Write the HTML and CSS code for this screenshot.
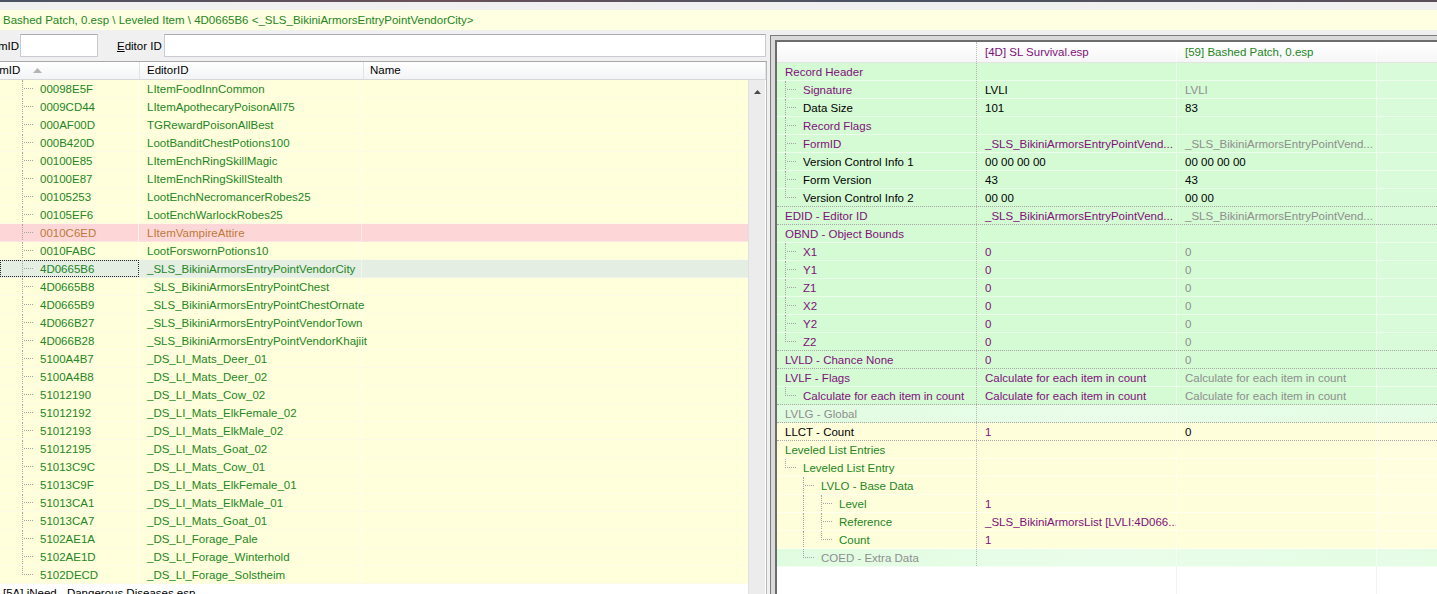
FILE: index.html
```html
<!DOCTYPE html>
<html lang="en">
<head>
    <meta charset="UTF-8">
    <title>xEdit - Leveled Item</title>
    <link rel="stylesheet" href="styles.css">
</head>
<body>

<div class="topline"></div>
<div class="crumb">Bashed Patch, 0.esp \ Leveled Item \ 4D0665B6 &lt;_SLS_BikiniArmorsEntryPointVendorCity&gt;</div>

<div class="main">
    <!-- left: record list -->
    <div class="left">
        <div class="filters">
            <span class="clip-label"><span>FormID</span></span>
            <span class="input short"></span>
            <span class="flabel"><u>E</u>ditor ID</span>
            <span class="input wide"></span>
        </div>
        <div class="list">
            <div class="list-body">
                <div class="lhead">
                    <div class="c-id"><span class="clipped">FormID</span><svg class="sort" width="9" height="5" viewBox="0 0 9 5"><path d="M0 5 L4.5 0 L9 5 Z" fill="#b4b4b4"/></svg></div>
                    <div class="c-edid">EditorID</div>
                    <div class="c-name">Name</div>
                </div>
                <div class="row"><div class="c-id"><i class="tr tee"></i>00098E5F</div><div class="c-edid">LItemFoodInnCommon</div><div class="c-name"></div></div>
                <div class="row"><div class="c-id"><i class="tr tee"></i>0009CD44</div><div class="c-edid">LItemApothecaryPoisonAll75</div><div class="c-name"></div></div>
                <div class="row"><div class="c-id"><i class="tr tee"></i>000AF00D</div><div class="c-edid">TGRewardPoisonAllBest</div><div class="c-name"></div></div>
                <div class="row"><div class="c-id"><i class="tr tee"></i>000B420D</div><div class="c-edid">LootBanditChestPotions100</div><div class="c-name"></div></div>
                <div class="row"><div class="c-id"><i class="tr tee"></i>00100E85</div><div class="c-edid">LItemEnchRingSkillMagic</div><div class="c-name"></div></div>
                <div class="row"><div class="c-id"><i class="tr tee"></i>00100E87</div><div class="c-edid">LItemEnchRingSkillStealth</div><div class="c-name"></div></div>
                <div class="row"><div class="c-id"><i class="tr tee"></i>00105253</div><div class="c-edid">LootEnchNecromancerRobes25</div><div class="c-name"></div></div>
                <div class="row"><div class="c-id"><i class="tr tee"></i>00105EF6</div><div class="c-edid">LootEnchWarlockRobes25</div><div class="c-name"></div></div>
                <div class="row pink"><div class="c-id"><i class="tr tee"></i>0010C6ED</div><div class="c-edid">LItemVampireAttire</div><div class="c-name"></div></div>
                <div class="row"><div class="c-id"><i class="tr tee"></i>0010FABC</div><div class="c-edid">LootForswornPotions10</div><div class="c-name"></div></div>
                <div class="row selected"><div class="c-id"><i class="tr tee"></i>4D0665B6</div><div class="c-edid">_SLS_BikiniArmorsEntryPointVendorCity</div><div class="c-name"></div></div>
                <div class="row"><div class="c-id"><i class="tr tee"></i>4D0665B8</div><div class="c-edid">_SLS_BikiniArmorsEntryPointChest</div><div class="c-name"></div></div>
                <div class="row"><div class="c-id"><i class="tr tee"></i>4D0665B9</div><div class="c-edid">_SLS_BikiniArmorsEntryPointChestOrnate</div><div class="c-name"></div></div>
                <div class="row"><div class="c-id"><i class="tr tee"></i>4D066B27</div><div class="c-edid">_SLS_BikiniArmorsEntryPointVendorTown</div><div class="c-name"></div></div>
                <div class="row"><div class="c-id"><i class="tr tee"></i>4D066B28</div><div class="c-edid">_SLS_BikiniArmorsEntryPointVendorKhajiit</div><div class="c-name"></div></div>
                <div class="row"><div class="c-id"><i class="tr tee"></i>5100A4B7</div><div class="c-edid">_DS_LI_Mats_Deer_01</div><div class="c-name"></div></div>
                <div class="row"><div class="c-id"><i class="tr tee"></i>5100A4B8</div><div class="c-edid">_DS_LI_Mats_Deer_02</div><div class="c-name"></div></div>
                <div class="row"><div class="c-id"><i class="tr tee"></i>51012190</div><div class="c-edid">_DS_LI_Mats_Cow_02</div><div class="c-name"></div></div>
                <div class="row"><div class="c-id"><i class="tr tee"></i>51012192</div><div class="c-edid">_DS_LI_Mats_ElkFemale_02</div><div class="c-name"></div></div>
                <div class="row"><div class="c-id"><i class="tr tee"></i>51012193</div><div class="c-edid">_DS_LI_Mats_ElkMale_02</div><div class="c-name"></div></div>
                <div class="row"><div class="c-id"><i class="tr tee"></i>51012195</div><div class="c-edid">_DS_LI_Mats_Goat_02</div><div class="c-name"></div></div>
                <div class="row"><div class="c-id"><i class="tr tee"></i>51013C9C</div><div class="c-edid">_DS_LI_Mats_Cow_01</div><div class="c-name"></div></div>
                <div class="row"><div class="c-id"><i class="tr tee"></i>51013C9F</div><div class="c-edid">_DS_LI_Mats_ElkFemale_01</div><div class="c-name"></div></div>
                <div class="row"><div class="c-id"><i class="tr tee"></i>51013CA1</div><div class="c-edid">_DS_LI_Mats_ElkMale_01</div><div class="c-name"></div></div>
                <div class="row"><div class="c-id"><i class="tr tee"></i>51013CA7</div><div class="c-edid">_DS_LI_Mats_Goat_01</div><div class="c-name"></div></div>
                <div class="row"><div class="c-id"><i class="tr tee"></i>5102AE1A</div><div class="c-edid">_DS_LI_Forage_Pale</div><div class="c-name"></div></div>
                <div class="row"><div class="c-id"><i class="tr tee"></i>5102AE1D</div><div class="c-edid">_DS_LI_Forage_Winterhold</div><div class="c-name"></div></div>
                <div class="row"><div class="c-id"><i class="tr end"></i>5102DECD</div><div class="c-edid">_DS_LI_Forage_Solstheim</div><div class="c-name"></div></div>
                <div class="row file">[5A] iNeed - Dangerous Diseases.esp</div>
            </div>
            <div class="vscroll">
                <svg width="7" height="4" viewBox="0 0 7 4"><path d="M0 4 L3.5 0 L7 4 Z" fill="#4a4a4a"/></svg>
            </div>
        </div>
    </div>

    <!-- right: record view -->
    <div class="right">
        <div class="view">
            <div class="vhead">
                <div class="lbl"></div>
                <div class="v1 p">[4D] SL Survival.esp</div>
                <div class="v2 g">[59] Bashed Patch, 0.esp</div>
                <div class="v3"></div>
            </div>

            <div class="rrow green"><div class="lbl p">Record Header</div><div class="v1"></div><div class="v2"></div><div class="v3"></div></div>
            <div class="rrow green"><div class="lbl p"><i class="tr tee"></i>Signature</div><div class="v1 k">LVLI</div><div class="v2 gr">LVLI</div><div class="v3"></div></div>
            <div class="rrow green"><div class="lbl k"><i class="tr tee"></i>Data Size</div><div class="v1 k">101</div><div class="v2 k">83</div><div class="v3"></div></div>
            <div class="rrow green"><div class="lbl p"><i class="tr tee"></i>Record Flags</div><div class="v1"></div><div class="v2"></div><div class="v3"></div></div>
            <div class="rrow green"><div class="lbl p"><i class="tr tee"></i>FormID</div><div class="v1 p">_SLS_BikiniArmorsEntryPointVend...</div><div class="v2 gr">_SLS_BikiniArmorsEntryPointVend...</div><div class="v3"></div></div>
            <div class="rrow green"><div class="lbl k"><i class="tr tee"></i>Version Control Info 1</div><div class="v1 k">00 00 00 00</div><div class="v2 k">00 00 00 00</div><div class="v3"></div></div>
            <div class="rrow green"><div class="lbl k"><i class="tr tee"></i>Form Version</div><div class="v1 k">43</div><div class="v2 k">43</div><div class="v3"></div></div>
            <div class="rrow green dotted"><div class="lbl k"><i class="tr end"></i>Version Control Info 2</div><div class="v1 k">00 00</div><div class="v2 k">00 00</div><div class="v3"></div></div>
            <div class="rrow green dotted"><div class="lbl p">EDID - Editor ID</div><div class="v1 p">_SLS_BikiniArmorsEntryPointVend...</div><div class="v2 gr">_SLS_BikiniArmorsEntryPointVend...</div><div class="v3"></div></div>
            <div class="rrow green"><div class="lbl p">OBND - Object Bounds</div><div class="v1"></div><div class="v2"></div><div class="v3"></div></div>
            <div class="rrow green"><div class="lbl p"><i class="tr tee"></i>X1</div><div class="v1 p">0</div><div class="v2 gr">0</div><div class="v3"></div></div>
            <div class="rrow green"><div class="lbl p"><i class="tr tee"></i>Y1</div><div class="v1 p">0</div><div class="v2 gr">0</div><div class="v3"></div></div>
            <div class="rrow green"><div class="lbl p"><i class="tr tee"></i>Z1</div><div class="v1 p">0</div><div class="v2 gr">0</div><div class="v3"></div></div>
            <div class="rrow green"><div class="lbl p"><i class="tr tee"></i>X2</div><div class="v1 p">0</div><div class="v2 gr">0</div><div class="v3"></div></div>
            <div class="rrow green"><div class="lbl p"><i class="tr tee"></i>Y2</div><div class="v1 p">0</div><div class="v2 gr">0</div><div class="v3"></div></div>
            <div class="rrow green dotted"><div class="lbl p"><i class="tr end"></i>Z2</div><div class="v1 p">0</div><div class="v2 gr">0</div><div class="v3"></div></div>
            <div class="rrow green dotted"><div class="lbl p">LVLD - Chance None</div><div class="v1 p">0</div><div class="v2 gr">0</div><div class="v3"></div></div>
            <div class="rrow green"><div class="lbl p">LVLF - Flags</div><div class="v1 p">Calculate for each item in count</div><div class="v2 gr">Calculate for each item in count</div><div class="v3"></div></div>
            <div class="rrow green dotted"><div class="lbl p"><i class="tr end"></i>Calculate for each item in count</div><div class="v1 p">Calculate for each item in count</div><div class="v2 gr">Calculate for each item in count</div><div class="v3"></div></div>
            <div class="rrow pale dotted"><div class="lbl gr">LVLG - Global</div><div class="v1"></div><div class="v2"></div><div class="v3"></div></div>
            <div class="rrow yellow dotted"><div class="lbl k">LLCT - Count</div><div class="v1 p">1</div><div class="v2 k">0</div><div class="v3"></div></div>
            <div class="rrow yellow"><div class="lbl g">Leveled List Entries</div><div class="v1"></div><div class="v2"></div><div class="v3"></div></div>
            <div class="rrow yellow"><div class="lbl g"><i class="tr end"></i>Leveled List Entry</div><div class="v1"></div><div class="v2"></div><div class="v3"></div></div>
            <div class="rrow yellow"><div class="lbl g"><i class="tr"></i><i class="tr tee"></i>LVLO - Base Data</div><div class="v1"></div><div class="v2"></div><div class="v3"></div></div>
            <div class="rrow yellow"><div class="lbl g"><i class="tr"></i><i class="tr pipe"></i><i class="tr tee"></i>Level</div><div class="v1 p">1</div><div class="v2"></div><div class="v3"></div></div>
            <div class="rrow yellow"><div class="lbl g"><i class="tr"></i><i class="tr pipe"></i><i class="tr tee"></i>Reference</div><div class="v1 p">_SLS_BikiniArmorsList [LVLI:4D066...</div><div class="v2"></div><div class="v3"></div></div>
            <div class="rrow yellow"><div class="lbl g"><i class="tr"></i><i class="tr pipe"></i><i class="tr end"></i>Count</div><div class="v1 p">1</div><div class="v2"></div><div class="v3"></div></div>
            <div class="rrow pale"><div class="lbl gr"><i class="tr"></i><i class="tr end"></i>COED - Extra Data</div><div class="v1"></div><div class="v2"></div><div class="v3"></div></div>

            <div class="rrow empty"><div class="lbl"></div><div class="v1"></div><div class="v2"></div><div class="v3"></div></div>
        </div>
    </div>
</div>

</body>
</html>
```

FILE: styles.css
```css
/* record browser, win7 look */
html, body { margin: 0; padding: 0; }
body { width: 1437px; height: 594px; overflow: hidden; background-color: #f0f0f0; font-family: 'Liberation Sans', Arial, sans-serif; font-size: 11.5px; color: #000; }

.topline { height: 2px; background: linear-gradient(90deg, #4b5363, #6a5058 30%, #4b5363 60%, #5b4f5a); margin-bottom: 8px; }
.crumb { height: 20px; line-height: 21px; background-color: #ffffe1; color: #238623; padding-left: 3px; white-space: nowrap; }

.main { display: flex; height: 564px; }

/* left pane */
.left { width: 767px; flex: none; display: flex; flex-direction: column; }
.filters { height: 31px; display: flex; align-items: center; }
.clip-label { width: 19px; display: flex; justify-content: flex-end; overflow: hidden; white-space: nowrap; margin-right: 1px; }
.input { display: block; height: 21px; background: #fff; border: 1px solid #c8ccd2; border-top-color: #a9acb3; }
.input.short { width: 76px; }
.input.wide { flex: 1; margin-right: 1px; }
.flabel { width: 47px; padding-left: 19px; white-space: nowrap; }

.list { flex: 1; display: flex; border-top: 1px solid #a8a8a8; border-right: 1px solid #b8b8b8; background: #fff; overflow: hidden; }
.list-body { width: 748px; flex: none; }
.lhead { display: flex; height: 17px; line-height: 17px; background: linear-gradient(#ffffff, #f3f4f6); border-bottom: 1px solid #d8d8d8; width: 766px; margin-right: -18px; position: relative; z-index: 1; }
.lhead > div { border-right: 1px solid #e2e3e6; white-space: nowrap; overflow: hidden; }
.lhead .c-id { padding-left: 0; display: flex; align-items: center; }
.lhead .c-name { flex: 1; }
.clipped { margin-left: -18px; }
.sort { margin-left: 13px; }

.row { display: flex; height: 17px; line-height: 18px; background-color: #ffffdc; border-bottom: 1px solid #fbfbe6; color: #238623; white-space: nowrap; }
.c-id { width: 139px; flex: none; border-right: 1px solid rgba(255,255,255,0.7); padding-left: 22px; box-sizing: border-box; display: flex; overflow: hidden; }
.c-edid { width: 223px; flex: none; border-right: 1px solid rgba(255,255,255,0.5); padding-left: 8px; box-sizing: border-box; overflow: visible; position: relative; }
.c-name { flex: 1; padding-left: 6px; overflow: hidden; }
.lhead .c-id { width: 140px; }
.lhead .c-edid { width: 224px; padding-left: 7px; }
.row.pink { background-color: #fdd7d7; color: #bf7a3a; border-bottom-color: #fde4e4; }
.row.selected { background-color: #e4eee2; border-bottom-color: #eef4ec; }
.row.selected .c-id { outline: 1px dotted #222; outline-offset: -1px; }
.row.file { background: #fff; color: #000; padding-left: 3px; border-bottom: none; }

.vscroll { width: 17px; flex: none; margin-top: 18px; background: #ececec; border-left: 1px solid #e0e0e0; display: flex; justify-content: center; padding-top: 10px; box-sizing: border-box; }
.vscroll svg { display: block; }

/* tree lines */
.tr { display: block; width: 18px; height: 17px; flex: none; position: relative; }
.tr.pipe::before, .tr.tee::before, .tr.end::before { content: ""; position: absolute; left: 0; top: 0; height: 18px; border-left: 1px dotted #a4a4a4; }
.tr.end::before { height: 9px; }
.tr.tee::after, .tr.end::after { content: ""; position: absolute; left: 2px; top: 8px; width: 9px; border-top: 1px dotted #a4a4a4; }

/* right pane */
.right { flex: 1; display: flex; margin: 5px 0 0 3px; border-top: 1px solid #7c7c7c; border-left: 1px solid #7c7c7c; background: #dadada; padding: 4px 0 0 4px; }
.view { flex: 1; border-top: 2px solid #6c6c6c; border-left: 2px solid #6c6c6c; background: #fff; overflow: hidden; display: flex; flex-direction: column; }
.vhead { display: flex; height: 20px; line-height: 21px; background: linear-gradient(#ffffff, #f6f6f6); border-bottom: 1px solid #e4e4e4; flex: none; }
.vhead .lbl { border-right: 1px dotted #b8b8b8; }
.rrow { display: flex; height: 17px; line-height: 18px; border-bottom: 1px solid rgba(255,255,255,0.55); white-space: nowrap; flex: none; }
.rrow.dotted { border-bottom: 1px dotted #a8a8a8; }
.rrow.green { background-color: #d4fbd4; }
.rrow.pale { background: linear-gradient(90deg, #e0fce0, #eafdea 50%, #e2fce2); }
.rrow.yellow { background-color: #fffedb; }
.rrow.empty { flex: 1; border-bottom: none; background: #fff; }

.lbl { width: 200px; flex: none; box-sizing: border-box; padding-left: 8px; border-right: 1px dotted #b4b4b4; display: flex; overflow: hidden; }
.v1, .v2 { width: 200px; flex: none; box-sizing: border-box; padding-left: 8px; overflow: hidden; border-right: 1px solid rgba(255,255,255,0.6); }
.v3 { flex: 1; background: rgba(255,255,255,0.12); }
.rrow.empty .lbl { border-right: none; }
.rrow.empty .v1, .rrow.empty .v2 { border-right-color: #f2f2f2; }

.p { color: #80107a; }
.g { color: #238623; }
.gr { color: #8e8e8e; }
.k { color: #000; }
```
